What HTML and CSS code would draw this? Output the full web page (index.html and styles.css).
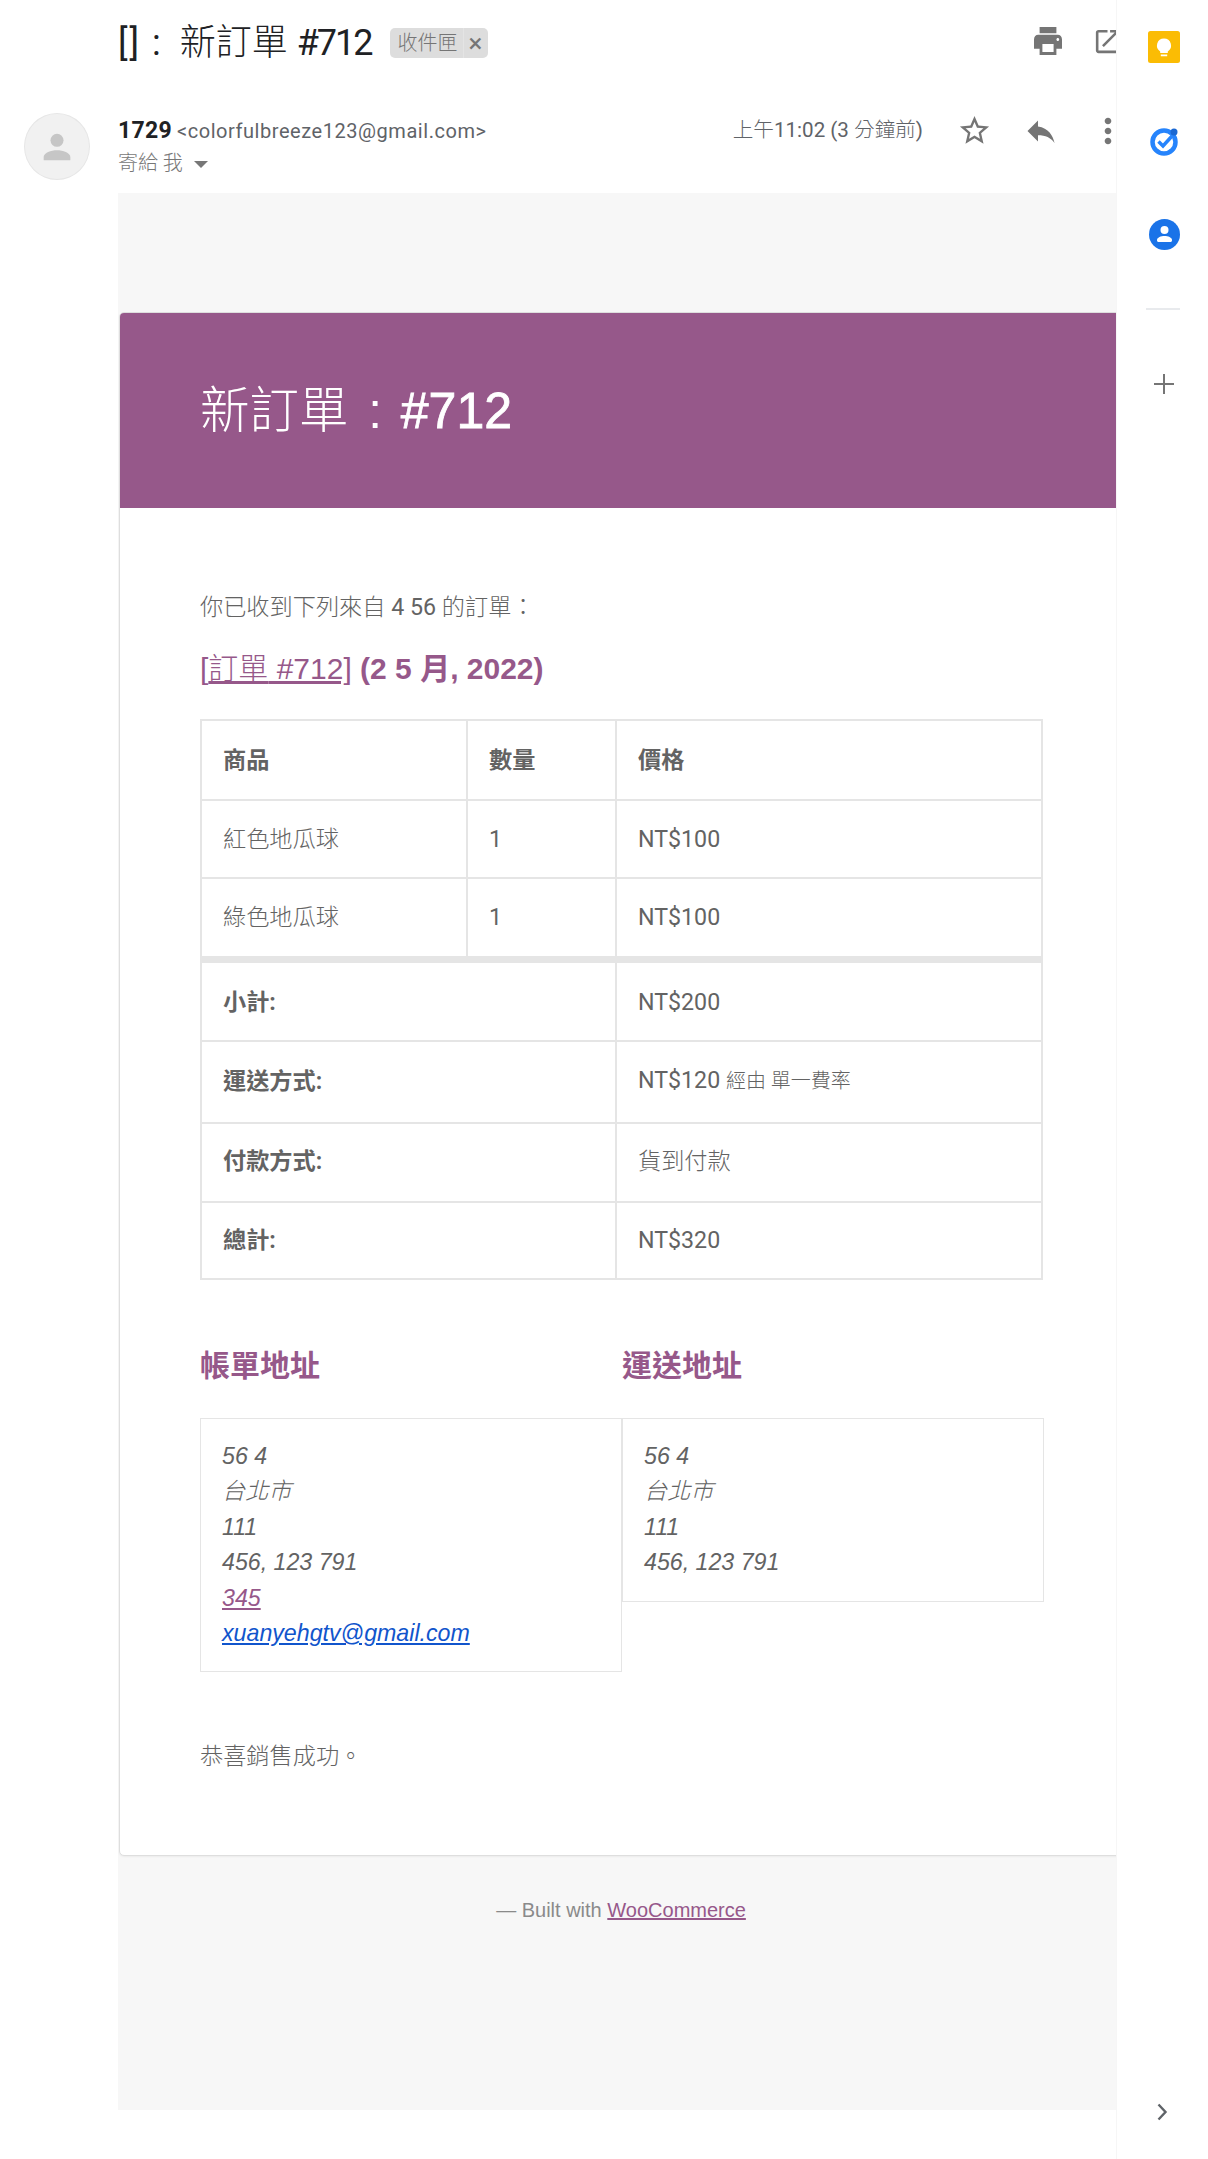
FILE: index.html
```html
<!DOCTYPE html>
<html lang="zh-Hant">
<head>
  <meta charset="UTF-8">
  <title>新訂單 #712</title>
  <link rel="stylesheet" href="styles.css">
</head>
<body>
  <div class="page">
    <div class="main">
      <!-- Subject -->
      <div class="subject-row">
        <h2 class="subject"><span class="subject-prefix">[] :</span> <span class="cjk">新訂單</span> <span class="subject-num">#712</span></h2>
        <span class="chip"><span class="chip-label cjk">收件匣</span><span class="chip-close">×</span></span>
        <div class="subject-tools">
          <svg class="icon-print" viewBox="2 3 20 18" preserveAspectRatio="none"><path d="M19 8H5c-1.66 0-3 1.34-3 3v6h4v4h12v-4h4v-6c0-1.66-1.34-3-3-3zm-3 11H8v-5h8v5zm3-7c-.55 0-1-.45-1-1s.45-1 1-1 1 .45 1 1-.45 1-1 1zm-1-9H6v4h12V3z"/></svg>
          <svg class="icon-open" viewBox="0 0 24 24"><path d="M19 19H5V5h7V3H5c-1.11 0-2 .9-2 2v14c0 1.1.89 2 2 2h14c1.1 0 2-.9 2-2v-7h-2v7zM14 3v2h3.59l-9.83 9.83 1.41 1.41L19 6.41V10h2V3h-7z"/></svg>
        </div>
      </div>

      <!-- Sender -->
      <div class="sender-row">
        <div class="avatar">
          <svg viewBox="0 0 24 24"><circle cx="12" cy="8" r="3.9"/><path d="M12 14c-3.5 0-8 1.6-8 4v2h16v-2c0-2.4-4.5-4-8-4z"/></svg>
        </div>
        <div class="sender-meta">
          <div class="sender-line"><b class="sender-name">1729</b> <span class="sender-mail">&lt;colorfulbreeze123@gmail.com&gt;</span></div>
          <div class="to-line"><span class="cjk">寄給 我</span> <span class="to-caret"></span></div>
        </div>
        <div class="sender-tools">
          <span class="time"><span class="cjk">上午</span>11:02 (3 <span class="cjk">分鐘前</span>)</span>
          <svg class="icon-star" viewBox="0 0 24 24"><path d="M22 9.24l-7.19-.62L12 2 9.19 8.63 2 9.24l5.46 4.73L5.82 21 12 17.27 18.18 21l-1.63-7.03L22 9.24zM12 15.4l-3.76 2.27 1-4.28-3.32-2.88 4.38-.38L12 6.1l1.71 4.04 4.38.38-3.32 2.88 1 4.28L12 15.4z"/></svg>
          <svg class="icon-reply" viewBox="0 0 24 24"><path d="M10 9V5l-7 7 7 7v-4.1c5 0 8.5 1.6 11 5.1-1-5-4-10-11-11z"/></svg>
          <svg class="icon-more" viewBox="0 0 24 24"><path d="M12 8c1.1 0 2-.9 2-2s-.9-2-2-2-2 .9-2 2 .9 2 2 2zm0 2c-1.1 0-2 .9-2 2s.9 2 2 2 2-.9 2-2-.9-2-2-2zm0 6c-1.1 0-2 .9-2 2s.9 2 2 2 2-.9 2-2-.9-2-2-2z"/></svg>
        </div>
      </div>

      <!-- Email body -->
      <div class="mail">
        <div class="card">
          <div class="card-header">
            <h1 class="card-title"><span class="cjk">新訂單</span> <span class="card-colon">:</span> <b class="card-num">#712</b></h1>
          </div>
          <div class="card-body">
            <p class="intro"><span class="cjk">你已收到下列來自</span> 4 56 <span class="cjk">的訂單：</span></p>
            <h2 class="order-title"><a href="#">[<span class="cjk">訂單</span> #712]</a> (2 5 月, 2022)</h2>

            <table class="order-table">
              <colgroup>
                <col class="col-name">
                <col class="col-qty">
                <col>
              </colgroup>
              <thead>
                <tr>
                  <th>商品</th>
                  <th>數量</th>
                  <th>價格</th>
                </tr>
              </thead>
              <tbody>
                <tr>
                  <td class="cjk">紅色地瓜球</td>
                  <td>1</td>
                  <td>NT$100</td>
                </tr>
                <tr class="last-item">
                  <td class="cjk">綠色地瓜球</td>
                  <td>1</td>
                  <td>NT$100</td>
                </tr>
              </tbody>
              <tfoot>
                <tr class="first-total">
                  <th colspan="2">小計:</th>
                  <td>NT$200</td>
                </tr>
                <tr class="shipping-row">
                  <th colspan="2">運送方式:</th>
                  <td>NT$120 <small class="via cjk">經由 單一費率</small></td>
                </tr>
                <tr class="payment-row">
                  <th colspan="2">付款方式:</th>
                  <td class="cjk">貨到付款</td>
                </tr>
                <tr class="total-row">
                  <th colspan="2">總計:</th>
                  <td>NT$320</td>
                </tr>
              </tfoot>
            </table>

            <div class="addresses">
              <div class="address-col">
                <h2 class="address-title">帳單地址</h2>
                <address class="address-box">
                  56 4<br>
                  <span class="cjk">台北市</span><br>
                  111<br>
                  456, 123 791<br>
                  <a class="phone" href="#">345</a><br>
                  <a class="mail-link" href="#">xuanyehgtv@gmail.com</a>
                </address>
              </div>
              <div class="address-col">
                <h2 class="address-title">運送地址</h2>
                <address class="address-box">
                  56 4<br>
                  <span class="cjk">台北市</span><br>
                  111<br>
                  456, 123 791
                </address>
              </div>
            </div>

            <p class="closing cjk">恭喜銷售成功。</p>
          </div>
        </div>
        <div class="mail-footer">— Built with <a href="#">WooCommerce</a></div>
      </div>
    </div>

    <!-- Side panel -->
    <div class="side">
      <div class="side-keep">
        <svg viewBox="0 0 32 32"><rect width="32" height="32" rx="2.5" fill="#fbbc04"/><path fill="#fff" d="M16 7.5a7 7 0 0 0-3.8 12.9V22h7.6v-1.6A7 7 0 0 0 16 7.5zM12.8 23.5h6.4v1.8h-6.4z"/></svg>
      </div>
      <div class="side-tasks">
        <svg viewBox="0 0 30 30"><circle cx="14" cy="16" r="11.5" fill="none" stroke="#2684fc" stroke-width="4.5"/><path d="M8.5 15.5l4.5 4.5 10-11" fill="none" stroke="#2684fc" stroke-width="3.5"/><circle cx="24" cy="6" r="3.5" fill="#1967d2"/></svg>
      </div>
      <div class="side-contacts">
        <svg viewBox="0 0 31 31"><circle cx="15.5" cy="15.5" r="15.5" fill="#1a73e8"/><circle cx="15.5" cy="11" r="4" fill="#fff"/><path fill="#fff" d="M15.5 17c-3.5 0-7.5 1.5-7.5 4v.5c0 .8.7 1.5 1.5 1.5h12c.8 0 1.5-.7 1.5-1.5V21c0-2.5-4-4-7.5-4z"/></svg>
      </div>
      <div class="side-divider"></div>
      <div class="side-plus">
        <svg viewBox="0 0 20 20"><path d="M9 0h2v9h9v2h-9v9H9v-9H0V9h9z"/></svg>
      </div>
      <div class="side-chevron">
        <svg viewBox="0 0 12 18"><path d="M2.5 1.5L9.5 9l-7 7.5" fill="none" stroke="#5f6368" stroke-width="2.4"/></svg>
      </div>
    </div>
  </div>
</body>
</html>
```

FILE: styles.css
```css
/* General Styles */
html, body {
  margin: 0;
  padding: 0;
}

body {
  background-color: #ffffff;
  font-family: Roboto, "Noto Sans CJK TC", sans-serif;
  color: #222222;
}

/* Thin strokes for the Chinese text */
.cjk {
  font-weight: 300;
}

.page {
  display: flex;
  height: 2159px;
  overflow: hidden;
}

.main {
  width: 1116px;
  flex: none;
  overflow: hidden;
}

/* Subject */
.subject-row {
  display: flex;
  align-items: center;
  height: 82px;
  padding-left: 118px;
}

.subject {
  margin: 4px 0 0;
  font-size: 36px;
  font-weight: 400;
  line-height: 44px;
  color: #202124;
}

.subject-prefix {
  margin-right: 8px;
  letter-spacing: 2px;
}

.subject-num {
  letter-spacing: -2px;
}

.chip {
  display: flex;
  height: 30px;
  margin-left: 18px;
  margin-top: 4px;
  background-color: #dddddd;
  border-radius: 5px;
  font-size: 20px;
  line-height: 30px;
  color: #757575;
}

.chip-label {
  padding: 0 5px 0 8px;
  border-right: 1px solid #e4e4e4;
}

.chip-close {
  width: 24px;
  text-align: center;
  font-size: 26px;
}

.subject-tools {
  display: flex;
  align-items: center;
  margin-left: auto;
  margin-right: -7px;
}

.subject-tools svg,
.sender-tools svg {
  fill: #757575;
  flex: none;
}

.icon-print {
  width: 28px;
  height: 28px;
  margin-right: 30px;
}

.icon-open {
  width: 31px;
  height: 31px;
}

/* Sender */
.sender-row {
  display: flex;
  height: 111px;
  padding-left: 24px;
  box-sizing: border-box;
}

.avatar {
  width: 64px;
  height: 65px;
  margin-top: 31px;
  margin-right: 28px;
  border: 1px solid #e6e6e6;
  border-radius: 50%;
  background-color: #f1f1f1;
  display: flex;
  align-items: center;
  justify-content: center;
}

.avatar svg {
  width: 40px;
  height: 40px;
  fill: #c6c6c6;
}

.sender-meta {
  margin-top: 33px;
}

.sender-line {
  height: 32px;
  line-height: 32px;
  font-size: 20px;
}

.sender-name {
  font-size: 23px;
  letter-spacing: 0.3px;
  color: #202124;
}

.sender-mail {
  color: #5f6368;
  letter-spacing: 0.55px;
}

.to-line {
  height: 32px;
  line-height: 32px;
  font-size: 20px;
  color: #777777;
}

.to-caret {
  display: inline-block;
  margin-left: 6px;
  border-left: 7px solid transparent;
  border-right: 7px solid transparent;
  border-top: 7px solid #777777;
  vertical-align: 2px;
}

.sender-tools {
  display: flex;
  align-items: flex-start;
  margin-left: auto;
  margin-top: 31px;
  margin-right: -12px;
}

.time {
  margin-top: 1px;
  margin-right: 34px;
  font-size: 20.6px;
  line-height: 32px;
  color: #5f6368;
}

.icon-star {
  width: 35px;
  height: 35px;
  margin-right: 31px;
}

.icon-reply {
  width: 36px;
  height: 36px;
  margin-right: 29px;
}

.icon-more {
  width: 40px;
  height: 40px;
  margin-top: -2px;
}

/* Email body */
.mail {
  margin-left: 118px;
  height: 1917px;
  padding-top: 119px;
  box-sizing: border-box;
  background-color: #f7f7f7;
  overflow: hidden;
}

.card {
  width: 1004px;
  margin-left: 1px;
  box-sizing: border-box;
  height: 1544px;
  background-color: #ffffff;
  border: 1px solid #dedede;
  border-radius: 5px;
  box-shadow: 0 1px 2px rgba(0, 0, 0, 0.05);
  color: #636363;
}

.card-header {
  height: 195px;
  padding: 0 0 8px 80px;
  box-sizing: border-box;
  background-color: #96588a;
  border-radius: 4px 4px 0 0;
  display: flex;
  align-items: center;
}

.card-title {
  margin: 0;
  color: #ffffff;
  font-family: "Liberation Sans", "Noto Sans CJK TC", sans-serif;
  font-size: 49.5px;
  font-weight: 400;
}

.card-colon {
  margin: 0 5px 0 6px;
}

.card-num {
  font-size: 50px;
  font-weight: 400;
  -webkit-text-stroke: 0.8px #ffffff;
}

.card-body {
  padding: 0 78px 0 80px;
}

.intro {
  margin: 0;
  padding-top: 81px;
  font-size: 23.2px;
  line-height: 36px;
}

.order-title {
  margin: 24px 0 0;
  font-family: "Liberation Sans", "Noto Sans CJK TC", sans-serif;
  font-size: 30px;
  font-weight: 700;
  line-height: 40px;
  color: #96588a;
}

.order-title a {
  color: #96588a;
  font-weight: 400;
}

/* Order table */
.order-table {
  width: 843px;
  margin-top: 30px;
  border: 1px solid #e5e5e5;
  border-spacing: 0;
  border-collapse: separate;
  table-layout: fixed;
  font-size: 23.2px;
  color: #636363;
}

.col-name {
  width: 266px;
}

.col-qty {
  width: 149px;
}

.order-table th,
.order-table td {
  border: 1px solid #e5e5e5;
  padding: 20px 21px;
  line-height: 36px;
  text-align: left;
}

.order-table th {
  font-weight: 700;
}

.order-table td.cjk {
  font-weight: 300;
}

.order-table thead th {
  padding: 21px 21px 21px;
}

.last-item td {
  padding-bottom: 21px;
}

.first-total th,
.first-total td {
  border-top-width: 6px;
  padding: 21px 21px 20px;
}

.shipping-row th,
.shipping-row td {
  padding: 20px 21px 23px;
}

.payment-row th,
.payment-row td {
  padding: 19px 21px 22px;
}

.total-row th,
.total-row td {
  padding: 19px 21px 20px;
}

.via {
  font-size: 20px;
}

/* Addresses */
.addresses {
  display: flex;
  align-items: flex-start;
  margin-top: 62px;
}

.address-col {
  width: 50%;
}

.address-title {
  margin: 0 0 28px;
  font-family: "Liberation Sans", "Noto Sans CJK TC", sans-serif;
  font-size: 30px;
  font-weight: 700;
  line-height: 48px;
  color: #96588a;
}

.address-box {
  padding: 20px 21px;
  border: 1px solid #e5e5e5;
  font-family: "Liberation Sans", "Noto Sans CJK TC", sans-serif;
  font-size: 23.2px;
  font-style: italic;
  line-height: 35.4px;
  color: #636363;
}

.phone {
  color: #96588a;
}

.mail-link {
  color: #1155cc;
}

.closing {
  margin: 66px 0 0;
  font-size: 23.2px;
  line-height: 36px;
}

/* Footer */
.mail-footer {
  width: 1004px;
  margin-left: 1px;
  padding-top: 39px;
  text-align: center;
  font-family: "Liberation Sans", sans-serif;
  font-size: 20px;
  line-height: 30px;
  color: #8a8a8a;
}

.mail-footer a {
  color: #96588a;
}

/* Side panel */
.side {
  flex: 1;
  display: flex;
  flex-direction: column;
  align-items: center;
  padding-left: 3px;
  border-left: 1px solid #f6f6f6;
}

.side svg {
  display: block;
}

.side-keep {
  width: 32px;
  height: 32px;
  margin-top: 31px;
}

.side-tasks {
  width: 30px;
  height: 30px;
  margin-top: 63px;
  margin-left: 2px;
}

.side-contacts {
  width: 31px;
  height: 31px;
  margin-top: 63px;
}

.side-divider {
  width: 34px;
  height: 2px;
  margin-top: 58px;
  margin-right: 3px;
  background-color: #e8eaed;
}

.side-plus {
  width: 20px;
  height: 20px;
  margin-top: 64px;
  fill: #757575;
}

.side-chevron {
  width: 12px;
  height: 18px;
  margin-top: auto;
  margin-right: 5px;
  margin-bottom: 38px;
}
```
